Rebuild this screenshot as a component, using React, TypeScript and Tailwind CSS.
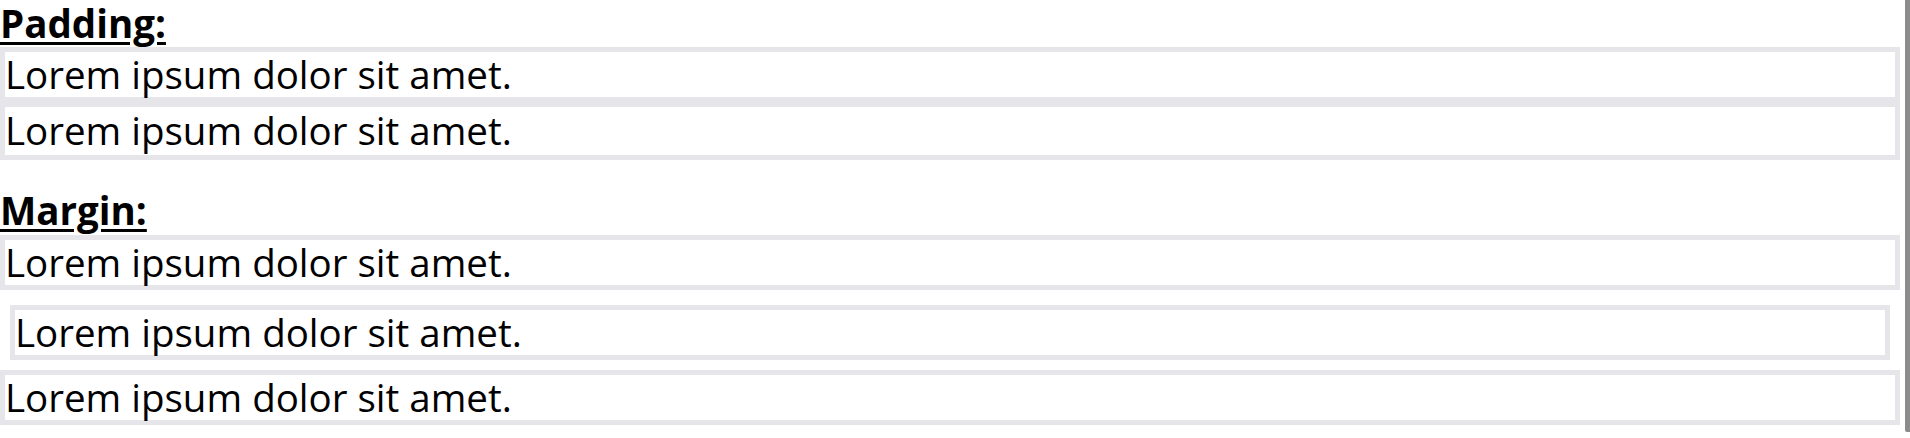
export default function App() {
  const box = 'border-[5px] border-[#e6e6ea] text-[38.5px] leading-[45px]';

  return (
    <div className="relative min-h-[438px] w-[1900px] bg-white font-['Open_Sans','Noto_Sans',sans-serif] text-black">
      {/* Padding section */}
      <h2 className="h-[47px] text-[38.5px] font-bold leading-[47px] underline decoration-[3px] underline-offset-[4px]">
        Padding:
      </h2>
      <div className={box}>Lorem ipsum dolor sit amet.</div>
      <div className={`${box} pt-[1px] pb-[2px]`}>Lorem ipsum dolor sit amet.</div>

      {/* Margin section */}
      <h2 className="mt-[28px] h-[47px] text-[38.5px] font-bold leading-[45px] underline decoration-[3px] underline-offset-[4px]">
        Margin:
      </h2>
      <div className={box}>Lorem ipsum dolor sit amet.</div>
      <div className={`${box} mx-[10px] mt-[15px] mb-[10px]`}>Lorem ipsum dolor sit amet.</div>
      <div className={box}>Lorem ipsum dolor sit amet.</div>

      {/* overlay scrollbar thumb */}
      <div className="fixed right-0 top-0 h-[432px] w-[5px] rounded-bl-[2px] bg-[#8c8c8c]" />
    </div>
  );
}
